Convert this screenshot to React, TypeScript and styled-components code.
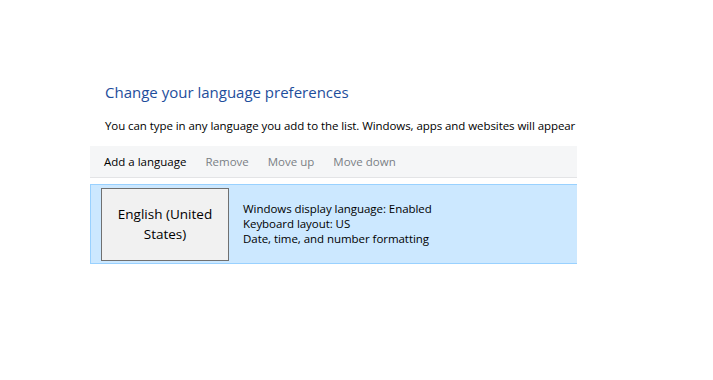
import React from 'react';
import styled, {createGlobalStyle} from 'styled-components';

const GlobalStyle = createGlobalStyle`
    html, body {
        margin: 0;
        padding: 0;
        background: #ffffff;
    }
    body {
        font-family: "Open Sans", "Noto Sans", "Liberation Sans", sans-serif;
        color: #000000;
    }
`;

const Page = styled.div`
    width: 713px;
    height: 380px;
    padding: 76px 0 0 90px;
    box-sizing: border-box;
`;

const Panel = styled.div`
    width: 487px;
    overflow: hidden;
`;

const Heading = styled.h1`
    margin: 0 0 0 15px;
    font-size: 15px;
    font-weight: 400;
    line-height: 32px;
    color: #1e4e9c;
    white-space: nowrap;
`;

const Intro = styled.p`
    margin: 8px 0 0 15px;
    font-size: 11.5px;
    line-height: 20px;
    white-space: nowrap;
    letter-spacing: -0.07px;
`;

const Toolbar = styled.div`
    margin-top: 10px;
    height: 31px;
    display: flex;
    align-items: center;
    gap: 19px;
    padding-left: 14px;
    background: #f5f6f7;
    border-bottom: 1px solid #e3e4e6;
`;

const ToolButton = styled.span<{disabled?: boolean}>`
    font-size: 11.5px;
    color: ${(props) => (props.disabled ? '#7a7f85' : '#000000')};
    cursor: ${(props) => (props.disabled ? 'default' : 'pointer')};
`;

const LanguageRow = styled.div`
    margin-top: 6px;
    height: 80px;
    display: flex;
    align-items: center;
    gap: 14px;
    padding-left: 10px;
    box-sizing: border-box;
    background: #cce8ff;
    border: 1px solid #99d1ff;
    border-right: none;
`;

const LanguageTile = styled.button`
    width: 128px;
    height: 73px;
    margin: 0;
    padding: 0 8px;
    background: #f1f1f1;
    border: 1px solid #707070;
    font-family: inherit;
    font-size: 13.5px;
    line-height: 20px;
    color: #000000;
    text-align: center;
`;

const Details = styled.div`
    display: flex;
    flex-direction: column;
    font-size: 11.5px;
    line-height: 15px;
    letter-spacing: -0.05px;
    padding-bottom: 2px;
`;

const tools = [
    {label: 'Add a language', disabled: false},
    {label: 'Remove', disabled: true},
    {label: 'Move up', disabled: true},
    {label: 'Move down', disabled: true},
];

const details = [
    'Windows display language: Enabled',
    'Keyboard layout: US',
    'Date, time, and number formatting',
];

const App = () => {
    return (
        <>
            <GlobalStyle/>
            <Page>
                <Panel>
                    <Heading>Change your language preferences</Heading>
                    <Intro>
                        You can type in any language you add to the list. Windows, apps and websites will appear
                    </Intro>
                    <Toolbar>
                        {tools.map((t) => (
                            <ToolButton key={t.label} disabled={t.disabled}>{t.label}</ToolButton>
                        ))}
                    </Toolbar>
                    <LanguageRow>
                        <LanguageTile>English (United States)</LanguageTile>
                        <Details>
                            {details.map((d) => (
                                <span key={d}>{d}</span>
                            ))}
                        </Details>
                    </LanguageRow>
                </Panel>
            </Page>
        </>
    );
};

export default App;
